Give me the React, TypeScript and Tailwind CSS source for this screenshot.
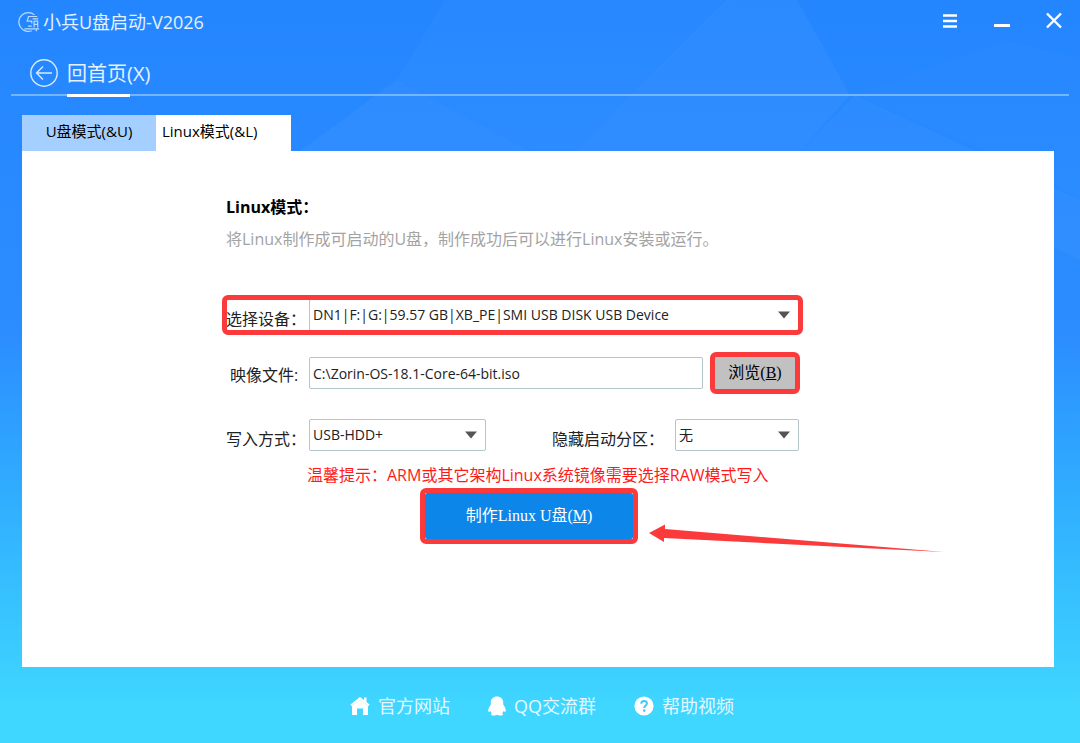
import React, { useState } from 'react';

const footerLinks = [
  { label: '官方网站', icon: 'home' },
  { label: 'QQ交流群', icon: 'qq' },
  { label: '帮助视频', icon: 'help' },
];

const Facets = () => (
  <svg
    className="absolute inset-0 -z-10 h-full w-full"
    viewBox="0 0 1080 743"
    preserveAspectRatio="none"
    aria-hidden="true"
  >
    <g fill="#ffffff" fillOpacity="0.02">
      <path d="M445 0H730L575 151H530L397 80Z" />
      <path d="M397 80L530 151H300Z" fillOpacity="0.04" />
      <path d="M727 0H797L850 95L800 151H575Z" fillOpacity="0.04" />
      <path d="M855 95L1080 200V260L1040 240L870 151H800Z" fillOpacity="0.03" />
      <path d="M1007 40L1080 60V200L1007 160L855 95Z" fillOpacity="0.01" />
    </g>
  </svg>
);

const Logo = () => (
  <svg className="h-6 w-[22px]" viewBox="0 0 24 24" fill="none" stroke="#b9dcff" strokeWidth="1.3" aria-hidden="true">
    <path d="M18 4.2A10.3 10.3 0 1 0 15 21.6" />
    <path d="M21 6H11.5L10 11h5v2.5M16 8.5h6M17.5 11h4v7M17.5 11v7M17.5 14.5h4M7 19.5h16M11 16.5h4M20 19v3" />
  </svg>
);

const FooterIcon = ({ name }: { name: string }) => {
  if (name === 'home') {
    return (
      <svg className="h-5 w-5" viewBox="0 0 20 20" fill="#fff" aria-hidden="true">
        <path d="M10 1L14 4V1.5H16.5V6L19.6 8.4L18.6 9.9L10 3.9L1.4 9.9L0.4 8.4Z" />
        <path d="M2 9.5L10 4L18 9.5V19H13V12.5H7V19H2Z" />
      </svg>
    );
  }
  if (name === 'qq') {
    return (
      <svg className="h-5 w-[18px]" viewBox="0 0 18 20" fill="#fff" aria-hidden="true">
        <path d="M9 .5C5.2 .5 2.800 3 2.800 6.300V8.600C1.500 10.400 .2 12.500 .2 14.600C.2 15.700 .8 16.200 1.400 15.800L2.400 14.900C2.700 15.700 3.200 16.500 4 17.200C3.300 17.500 2.900 17.900 2.900 18.400C2.900 19.200 4.500 19.500 6 19.500C7.300 19.500 8.500 19.200 9 18.800C9.500 19.200 10.700 19.500 12 19.500C13.500 19.500 15.100 19.200 15.100 18.400C15.100 17.900 14.700 17.500 14 17.200C14.800 16.500 15.300 15.700 15.600 14.900L16.600 15.800C17.200 16.200 17.800 15.700 17.800 14.600C17.800 12.500 16.500 10.400 15.200 8.600V6.300C15.200 3 12.800 .5 9 .5Z" />
      </svg>
    );
  }
  return (
    <svg className="h-5 w-5" viewBox="0 0 20 20" aria-hidden="true">
      <circle cx="10" cy="10" r="9.6" fill="#fff" />
      <path d="M7.3 7.7C7.3 6 8.4 5.1 10.1 5.1S12.9 6.1 12.9 7.5C12.9 9.5 10.2 9.600 10.2 12" fill="none" stroke="#3fcbff" strokeWidth="2" />
      <circle cx="10.2" cy="14.6" r="1.3" fill="#3fcbff" />
    </svg>
  );
};

// Red frame drawn around the controls the user has to touch
const Highlight = ({ className }: { className: string }) => (
  <span className={`pointer-events-none absolute rounded-md border-[5px] border-[#fb3a3c] ${className}`} />
);

interface DropDownProps {
  id: string;
  options: string[];
  className: string;
}

const DropDown: React.FC<DropDownProps> = ({ id, options, className }) => (
  <div className={`relative ${className}`}>
    <select
      id={id}
      className="h-8 w-full appearance-none rounded-xs border border-[#b4c6cc] bg-white pr-8 pl-[3px] text-sm text-[#222] outline-none"
    >
      {options.map((o) => (
        <option key={o}>{o}</option>
      ))}
    </select>
    <svg className="pointer-events-none absolute top-3 right-[9px] h-2 w-3" viewBox="0 0 12 8" fill="#555" aria-hidden="true">
      <path d="M0 .5H12L6 7.5Z" />
    </svg>
  </div>
);

const App: React.FC = () => {
  const [tab, setTab] = useState('linux');
  const [image, setImage] = useState('C:\\Zorin-OS-18.1-Core-64-bit.iso');

  return (
    <div className="relative isolate flex min-h-screen flex-col bg-linear-to-b from-[#2486ff] from-0% via-[#2c8dff] via-45% to-[#3fd6ff] to-95% font-['Open_Sans','Noto_Sans_CJK_SC',sans-serif] text-base text-[#222]">
      <Facets />

      <header className="flex h-11 items-center justify-between pr-4 pl-[18px]">
        <h1 className="flex items-center gap-[3px] text-lg text-[#e4f1ff]">
          <Logo />
          小兵U盘启动-V2026
        </h1>
        <div className="flex items-center gap-8 text-white">
          <button aria-label="菜单" className="h-5 w-5">
            <svg viewBox="0 0 20 20" stroke="currentColor" strokeWidth="2.6">
              <path d="M3 3.500H17M3 9H17M3 14.500H17" />
            </svg>
          </button>
          <button aria-label="最小化" className="h-5 w-5">
            <svg viewBox="0 0 20 20" stroke="currentColor" strokeWidth="3">
              <path d="M2 13.500H18" />
            </svg>
          </button>
          <button aria-label="关闭" className="h-5 w-5">
            <svg viewBox="0 0 20 20" stroke="currentColor" strokeWidth="2.4">
              <path d="M3 1.500L17 15.500M17 1.500L3 15.500" />
            </svg>
          </button>
        </div>
      </header>

      <nav className="mx-[11px] flex h-[52px] border-b-2 border-[#74b5ff] pl-[18px]">
        <a href="#home" className="flex gap-2 text-xl text-[#e4f1ff]">
          <svg className="mt-3.5 h-[30px] w-[30px]" viewBox="0 0 30 30" fill="none" stroke="#d8eaff" strokeWidth="1.4" aria-hidden="true">
            <circle cx="15" cy="15" r="13.2" />
            <path d="M23 15H7.5M14 8.5L7.5 15L14 21.5" />
          </svg>
          <span className="relative pt-3.5 leading-8">
            回首页(X)
            <span className="absolute -bottom-[3px] left-0 h-[3px] w-[63px] bg-white" />
          </span>
        </a>
      </nav>

      <main className="mx-[22px] mt-[19px] flex grow flex-col pr-1">
        <div role="tablist" className="flex h-9 text-[15px] text-black">
          <button
            role="tab"
            aria-selected={tab === 'usb'}
            onClick={() => setTab('usb')}
            className="w-[134px] bg-[#a5cfff] pb-1"
          >
            U盘模式(&amp;U)
          </button>
          <button
            role="tab"
            aria-selected={tab === 'linux'}
            onClick={() => setTab('linux')}
            className="w-[135px] bg-white pb-1 pl-1.5 text-left"
          >
            Linux模式(&amp;L)
          </button>
        </div>

        <section className="grow bg-white pt-11 pl-[204px]">
          <h2 className="leading-6 font-bold text-black">Linux模式：</h2>
          <p className="mt-2 leading-6 text-[#a3a3a3]">将Linux制作成可启动的U盘，制作成功后可以进行Linux安装或运行。</p>

          <form className="relative mt-12 max-w-[573px]" onSubmit={(e) => e.preventDefault()}>
            <div className="relative flex">
              <label htmlFor="device" className="w-[83px] pt-2 leading-6">选择设备：</label>
              <DropDown id="device" className="grow" options={['DN1|F:|G:|59.57 GB|XB_PE|SMI USB DISK USB Device']} />
              <Highlight className="-inset-x-1 -inset-y-1" />
            </div>

            <div className="mt-[26px] flex">
              <label htmlFor="image" className="w-[83px] pt-1.5 pl-1 leading-6">映像文件:</label>
              <input
                id="image"
                type="text"
                value={image}
                onChange={(e) => setImage(e.target.value)}
                className="h-8 min-w-0 grow rounded-xs border border-[#b4c6cc] bg-white px-[3px] text-sm outline-none"
              />
              <button
                type="button"
                className="relative mr-1 ml-3 h-8 w-20 bg-[#c1c1c1] font-['Liberation_Serif','Noto_Sans_CJK_SC',serif] text-black"
              >
                浏览(<u>B</u>)
                <Highlight className="-inset-[5px]" />
              </button>
            </div>

            <div className="mt-[30px] flex">
              <label htmlFor="mode" className="w-[83px] pt-2 leading-6">写入方式：</label>
              <DropDown id="mode" className="w-[177px]" options={['USB-HDD+', 'USB-ZIP+', 'RAW']} />
              <label htmlFor="hidden" className="ml-auto w-[123px] pt-2 leading-6">隐藏启动分区：</label>
              <DropDown id="hidden" className="w-[124px]" options={['无', '隐藏']} />
            </div>

            <p className="mt-3 pl-[81px] leading-6 text-[#ff1a1a]">
              温馨提示：ARM或其它架构Linux系统镜像需要选择RAW模式写入
            </p>

            <button
              type="submit"
              className="relative mt-1.5 ml-[199px] block h-[46px] w-[208px] rounded-xs bg-[#0d86ea] font-['Liberation_Serif','Noto_Sans_CJK_SC',serif] text-white"
            >
              制作Linux U盘(<u>M</u>)
              <Highlight className="-inset-[5px]" />
            </button>

            <svg className="pointer-events-none absolute top-[222px] left-[422px] h-8 w-[300px]" viewBox="0 0 300 32" fill="#fb3a3c" aria-hidden="true">
              <path d="M1 12L17 3.5V8L296 31L16 17V21Z" />
            </svg>
          </form>
        </section>
      </main>

      <footer className="flex h-[76px] items-center justify-center gap-[38px] pt-0.5 pl-1 text-lg text-[#e6f8ff]">
        {footerLinks.map((link) => (
          <a key={link.label} href={`#${link.icon}`} className="flex items-center gap-2">
            <FooterIcon name={link.icon} />
            {link.label}
          </a>
        ))}
      </footer>
    </div>
  );
};

export default App;
